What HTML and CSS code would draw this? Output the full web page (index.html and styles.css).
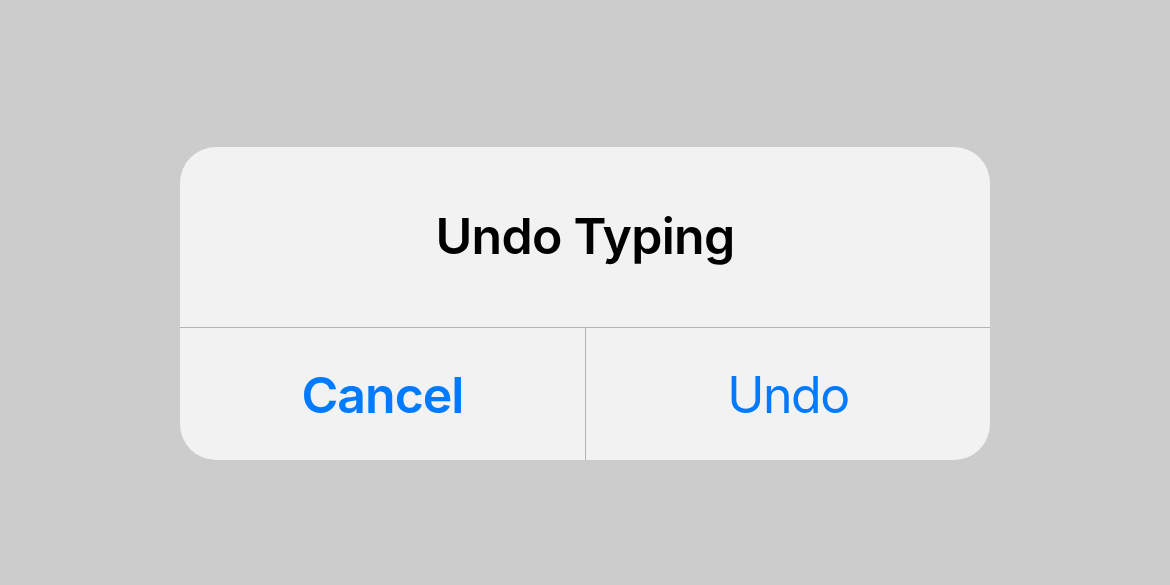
FILE: index.html
```html
<!DOCTYPE html>
<html>
<head>
<meta charset="utf-8">
<link rel="stylesheet" href="styles.css">
</head>
<body>
<div class="alert">
  <div class="alert-title">Undo Typing</div>
  <div class="alert-actions">
    <div class="action action-cancel">Cancel</div>
    <div class="action action-undo">Undo</div>
  </div>
</div>
</body>
</html>
```
FILE: styles.css
```css
html, body {
  margin: 0;
  padding: 0;
  background: #cccccc;
  width: 1170px;
  height: 585px;
  overflow: hidden;
}
body {
  display: flex;
  justify-content: center;
  align-items: flex-start;
  padding-top: 147px;
  box-sizing: border-box;
  font-family: Inter, "Noto Sans", sans-serif;
}
.alert {
  width: 810px;
  height: 313px;
  background: #f2f2f2;
  border-radius: 36px;
  display: flex;
  flex-direction: column;
  overflow: hidden;
}
.alert-title {
  height: 181px;
  display: flex;
  align-items: center;
  justify-content: center;
  padding-bottom: 2px;
  font-size: 50px;
  font-weight: 600;
  color: #000;
  border-bottom: 1px solid #b3b3b3;
  box-sizing: border-box;
  letter-spacing: -0.75px;
}
.alert-actions {
  flex: 1;
  display: grid;
  grid-template-columns: 1fr 1fr;
}
.action {
  display: flex;
  align-items: center;
  justify-content: center;
  padding-top: 2px;
  font-size: 50px;
  color: #007aff;
}
.action-cancel {
  font-weight: 600;
  letter-spacing: -1px;
}
.action-undo {
  font-weight: 400;
  letter-spacing: -1.5px;
  border-left: 1px solid #b3b3b3;
}
```
